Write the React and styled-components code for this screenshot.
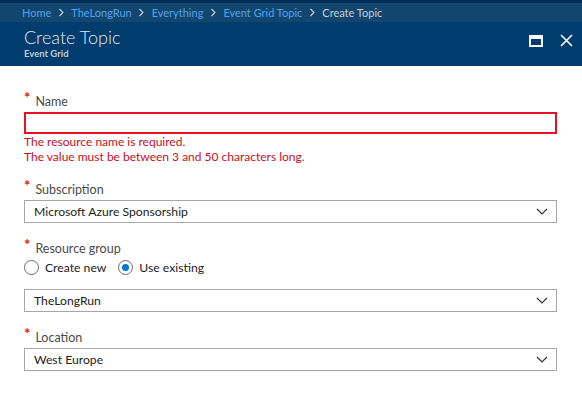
import React, { useState } from "react";
import styled, { createGlobalStyle } from "styled-components";

const GlobalStyle = createGlobalStyle`
  html, body {
    margin: 0;
    padding: 0;
    background: #ffffff;
  }
  body {
    font-family: Lato, "Open Sans", "Liberation Sans", sans-serif;
  }
`;

const crumbs = ["Home", "TheLongRun", "Everything", "Event Grid Topic"];

const App = () => {
  const [mode, setMode] = useState("existing");

  return (
    <Page>
      <GlobalStyle />
      <TopEdge />
      <Breadcrumb>
        {crumbs.map((c) => (
          <React.Fragment key={c}>
            <Crumb>{c}</Crumb>
            <Sep>
              <svg width="7" height="9" viewBox="0 0 7 9">
                <path d="M1.5 1 L5 4.5 L1.5 8" fill="none" stroke="#c8d0da" strokeWidth="1.1" />
              </svg>
            </Sep>
          </React.Fragment>
        ))}
        <Current>Create Topic</Current>
      </Breadcrumb>
      <Header>
        <div>
          <Title>Create Topic</Title>
          <Subtitle>Event Grid</Subtitle>
        </div>
        <Actions>
          <svg width="14" height="12" viewBox="0 0 14 12">
            <rect x="1" y="1" width="12" height="10" fill="none" stroke="#fff" strokeWidth="2" />
            <rect x="1" y="1" width="12" height="3" fill="#fff" />
          </svg>
          <svg width="13" height="13" viewBox="0 0 13 13">
            <path d="M1 1 L12 12 M12 1 L1 12" stroke="#fff" strokeWidth="1.6" />
          </svg>
        </Actions>
      </Header>

      <Form>
        <Field>
          <Label>
            <Star>*</Star>Name
          </Label>
          <TextInput $invalid />
          <Error>The resource name is required.</Error>
          <Error>The value must be between 3 and 50 characters long.</Error>
        </Field>

        <Field>
          <Label>
            <Star>*</Star>Subscription
          </Label>
          <Select value="Microsoft Azure Sponsorship" />
        </Field>

        <Field>
          <Label>
            <Star>*</Star>Resource group
          </Label>
          <RadioRow>
            <RadioOption onClick={() => setMode("new")}>
              <Radio $checked={mode === "new"} />
              Create new
            </RadioOption>
            <RadioOption onClick={() => setMode("existing")}>
              <Radio $checked={mode === "existing"} />
              Use existing
            </RadioOption>
          </RadioRow>
          <Spacer />
          <Select value="TheLongRun" />
        </Field>

        <Field>
          <Label>
            <Star>*</Star>Location
          </Label>
          <Select value="West Europe" />
        </Field>
      </Form>
    </Page>
  );
};

const Select = ({ value }) => (
  <SelectBox>
    <span>{value}</span>
    <svg width="12" height="7" viewBox="0 0 12 7">
      <path d="M1 1 L6 6 L11 1" fill="none" stroke="#333" strokeWidth="1.2" />
    </svg>
  </SelectBox>
);

const Page = styled.div`
  width: 582px;
  height: 406px;
  overflow: hidden;
  background: #fff;
`;

const TopEdge = styled.div`
  height: 3px;
  background: #002f57;
`;

const Breadcrumb = styled.div`
  height: 19px;
  background: #13466f;
  display: flex;
  align-items: center;
  padding-left: 22px;
  font-size: 11px;
  gap: 6.5px;
`;

const Crumb = styled.span`
  color: #4fa3ec;
`;

const Current = styled.span`
  color: #c8cdd4;
`;

const Sep = styled.span`
  display: flex;
  align-items: center;
`;

const Header = styled.div`
  height: 44px;
  background: #003c6e;
  display: flex;
  justify-content: space-between;
  align-items: flex-start;
  padding: 4px 9px 0 24px;
  box-sizing: border-box;
`;

const Title = styled.div`
  color: #e6ebf1;
  font-size: 18px;
  font-weight: 300;
  line-height: 22px;
`;

const Subtitle = styled.div`
  color: #c3ccd6;
  font-size: 9.5px;
  font-weight: 700;
  line-height: 12px;
`;

const Actions = styled.div`
  display: flex;
  gap: 17px;
  align-items: center;
  padding-top: 8px;
`;

const Form = styled.div`
  padding: 27px 25px 0 24px;
  display: flex;
  flex-direction: column;
  gap: 17px;
`;

const Field = styled.div`
  display: flex;
  flex-direction: column;
`;

const Label = styled.div`
  font-size: 12.5px;
  color: #4a4a4a;
  line-height: 17px;
  margin-bottom: 2px;
  display: flex;
  align-items: flex-start;
`;

const Star = styled.span`
  color: #e81123;
  font-size: 15px;
  font-weight: 700;
  line-height: 12px;
  margin-right: 5px;
  margin-top: -2px;
`;

const TextInput = styled.div`
  height: 22px;
  box-sizing: border-box;
  border: 2px solid ${(p) => (p.$invalid ? "#e81123" : "#a0a0a0")};
`;

const Error = styled.div`
  color: #c50f1f;
  font-size: 12px;
  line-height: 15px;
  &:first-of-type {
    margin-top: 1px;
  }
`;

const SelectBox = styled.div`
  height: 23px;
  box-sizing: border-box;
  border: 1px solid #a6a6a6;
  display: flex;
  align-items: center;
  justify-content: space-between;
  padding: 0 8px 0 9px;
  font-size: 12.2px;
  color: #222;
`;

const RadioRow = styled.div`
  display: flex;
  gap: 12px;
  margin-top: 1px;
`;

const RadioOption = styled.label`
  display: flex;
  align-items: center;
  gap: 6px;
  font-size: 12.2px;
  color: #222;
  cursor: pointer;
`;

const Radio = styled.span`
  width: 15px;
  height: 15px;
  box-sizing: border-box;
  border-radius: 50%;
  border: 1px solid #6b6b6b;
  display: flex;
  align-items: center;
  justify-content: center;
  &::after {
    content: "";
    width: 7px;
    height: 7px;
    border-radius: 50%;
    background: ${(p) => (p.$checked ? "#0078d7" : "transparent")};
  }
`;

const Spacer = styled.div`
  height: 14px;
`;

export default App;
